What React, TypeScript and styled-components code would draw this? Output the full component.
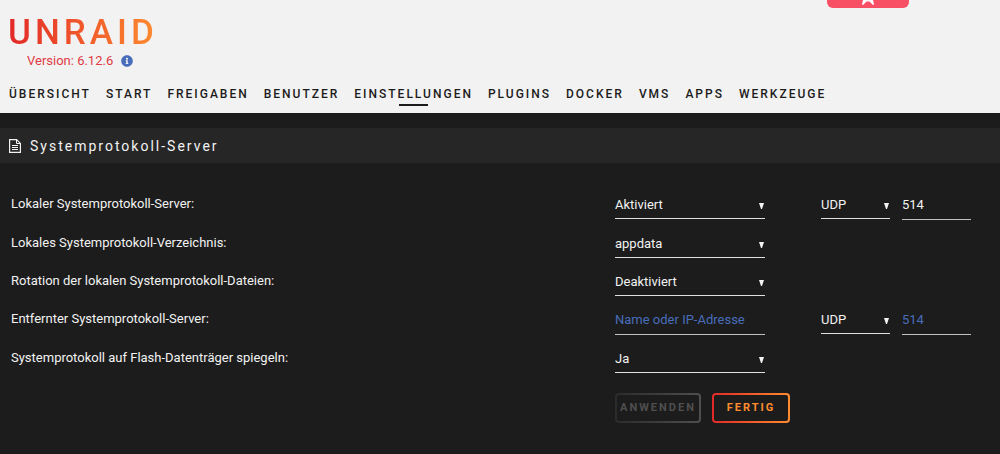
import React from 'react';
import styled, { createGlobalStyle } from 'styled-components';
import { FaInfoCircle } from 'react-icons/fa';

const GlobalStyle = createGlobalStyle`
  *, *::before, *::after { box-sizing: border-box; }
  html { background: #1c1c1c; }
  body {
    margin: 0;
    background: #1c1c1c;
    color: #f2f2f2;
    font-family: Roboto, "Noto Sans", sans-serif;
    font-size: 13px;
    line-height: 20px;
  }
  button, input, select { font: inherit; color: inherit; }
`;

const Header = styled.header`
  position: relative;
  padding: 15px 9px 7px;
  background: #f2f2f2;
  color: #1c1b1b;
`;

const Brand = styled.div`
  width: 150px;
`;

const Wordmark = styled.a`
  display: block;
  margin-left: -1px;
  font-size: 35px;
  line-height: 36px;
  font-weight: 500;
  letter-spacing: 4px;
  white-space: nowrap;
  text-decoration: none;
  color: transparent;
  background: linear-gradient(90deg, #e22828, #ff8c2f);
  background-clip: text;
  -webkit-background-clip: text;
`;

const Version = styled.div`
  display: flex;
  align-items: center;
  gap: 8px;
  padding-left: 18px;
  color: #e03a45;
  white-space: nowrap;

  svg { color: #486dba; }
`;

const Badge = styled.div`
  position: absolute;
  top: 0;
  right: 91px;
  width: 82px;
  height: 8px;
  display: flex;
  justify-content: center;
  border-radius: 0 0 6px 6px;
  background: #f94f64;
`;

const Nav = styled.nav`
  display: flex;
  gap: 15px;
  margin-top: 13px;
`;

const NavLink = styled.a<{ $active?: boolean }>`
  display: flex;
  flex-direction: column;
  align-items: center;
  font-size: 12px;
  line-height: 20px;
  font-weight: 500;
  letter-spacing: 2px;
  text-transform: uppercase;
  text-decoration: none;
  color: inherit;

  &::after {
    content: "";
    width: 25%;
    height: 2px;
    background: ${p => (p.$active ? '#1c1b1b' : 'transparent')};
  }
`;

const Title = styled.h1`
  display: flex;
  align-items: center;
  gap: 9px;
  height: 35px;
  margin: 15px 0 23px;
  padding: 0 9px;
  background: #262626;
  font-size: 14px;
  font-weight: 400;
  letter-spacing: 2px;
`;

const Row = styled.div`
  display: grid;
  grid-template-columns: 61.5% 1fr;
  align-items: start;
  padding: 6px 0 5px;
`;

const Label = styled.label`
  padding: 2px 0 0 11px;
`;

const Controls = styled.div`
  display: flex;
  align-items: flex-start;
  gap: 12px;
`;

const Wide = styled.div`
  width: 150px;
  margin-right: 44px;
`;

const Narrow = styled.div`
  width: 69px;
`;

const SelectBox = styled.div`
  display: grid;
  align-items: center;

  > * { grid-area: 1 / 1; }
  > svg { justify-self: end; margin-right: 1px; pointer-events: none; }
`;

const Select = styled.select`
  width: 100%;
  height: 27px;
  padding: 0;
  appearance: none;
  border: 0;
  border-bottom: 1px solid #e0e0e0;
  border-radius: 0;
  background: transparent;
  outline: none;

  option { background: #1c1c1c; }
`;

const TextInput = styled.input`
  display: block;
  width: 100%;
  height: 28px;
  padding: 0 0 2px;
  border: 0;
  border-bottom: 1px solid #c0c0c0;
  background: transparent;
  outline: none;

  &::placeholder { color: #486dba; opacity: 1; }
`;

const Actions = styled(Controls)`
  margin: 15px 0 31px 61.5%;
  gap: 11px;
`;

const Button = styled.button<{ $width: number }>`
  width: ${p => p.$width}px;
  height: 30px;
  padding: 0;
  border: 2px solid transparent;
  border-radius: 4px;
  font-size: 11px;
  font-weight: 700;
  letter-spacing: 2px;
  text-transform: uppercase;
  color: #ff8c2f;
  background:
    linear-gradient(#1c1c1c, #1c1c1c) padding-box,
    linear-gradient(90deg, #e22828, #ff8c2f) border-box;

  &:disabled {
    color: #4f4f4f;
    background:
      linear-gradient(#1c1c1c, #1c1c1c) padding-box,
      linear-gradient(90deg, #2b2b2b, #4f4f4f) border-box;
  }
`;

const menu = ['Übersicht', 'Start', 'Freigaben', 'Benutzer', 'Einstellungen', 'Plugins', 'Docker', 'VMs', 'Apps', 'Werkzeuge'];

function Dropdown({ options, ...rest }: { options: string[]; id?: string; 'aria-label'?: string }) {
  return (
    <SelectBox>
      <Select {...rest}>
        {options.map(o => <option key={o}>{o}</option>)}
      </Select>
      <svg width="5" height="6" viewBox="0 0 5 6" aria-hidden="true">
        <path d="M0 0h5L3 6H2z" fill="#f2f2f2" />
      </svg>
    </SelectBox>
  );
}

function FileIcon() {
  return (
    <svg width="12" height="14" viewBox="0 0 12 14" fill="none" stroke="#f2f2f2" aria-hidden="true">
      <path d="M.6.6h7l3.8 3.8v9H.6z" strokeWidth="1.2" />
      <path d="M7.5.8v3.7h3.7" />
      <path d="M3 6.5h6M3 8.5h6M3 10.5h6" strokeWidth="1.2" />
    </svg>
  );
}

export default function App() {
  return (
    <>
      <GlobalStyle />
      <Header>
        <Brand>
          <Wordmark href="#">UNRAID</Wordmark>
          <Version>Version: 6.12.6 <FaInfoCircle size={12} /></Version>
        </Brand>
        <Nav>
          {menu.map(m => <NavLink key={m} href="#" $active={m === 'Einstellungen'}>{m}</NavLink>)}
        </Nav>
        <Badge>
          <svg width="14" height="5" viewBox="0 0 14 5" aria-hidden="true">
            <path d="M2 0h10l1 4.5-1 .5-3.5-3.5h-3L2 5l-1-.5z" fill="#fff" />
          </svg>
        </Badge>
      </Header>
      <main>
        <Title><FileIcon />Systemprotokoll-Server</Title>
        <form>
          <Row>
            <Label htmlFor="local">Lokaler Systemprotokoll-Server:</Label>
            <Controls>
              <Wide><Dropdown id="local" options={['Aktiviert', 'Deaktiviert']} /></Wide>
              <Narrow><Dropdown aria-label="Protokoll" options={['UDP', 'TCP']} /></Narrow>
              <Narrow><TextInput aria-label="Port" defaultValue="514" /></Narrow>
            </Controls>
          </Row>
          <Row>
            <Label htmlFor="folder">Lokales Systemprotokoll-Verzeichnis:</Label>
            <Controls><Wide><Dropdown id="folder" options={['appdata']} /></Wide></Controls>
          </Row>
          <Row>
            <Label htmlFor="rotation">Rotation der lokalen Systemprotokoll-Dateien:</Label>
            <Controls><Wide><Dropdown id="rotation" options={['Deaktiviert', 'Aktiviert']} /></Wide></Controls>
          </Row>
          <Row>
            <Label htmlFor="remote">Entfernter Systemprotokoll-Server:</Label>
            <Controls>
              <Wide><TextInput id="remote" placeholder="Name oder IP-Adresse" /></Wide>
              <Narrow><Dropdown aria-label="Protokoll" options={['UDP', 'TCP']} /></Narrow>
              <Narrow><TextInput aria-label="Port" placeholder="514" /></Narrow>
            </Controls>
          </Row>
          <Row>
            <Label htmlFor="mirror">Systemprotokoll auf Flash-Datenträger spiegeln:</Label>
            <Controls><Wide><Dropdown id="mirror" options={['Ja', 'Nein']} /></Wide></Controls>
          </Row>
          <Actions>
            <Button type="submit" $width={86} disabled>Anwenden</Button>
            <Button type="button" $width={78}>Fertig</Button>
          </Actions>
        </form>
      </main>
    </>
  );
}
